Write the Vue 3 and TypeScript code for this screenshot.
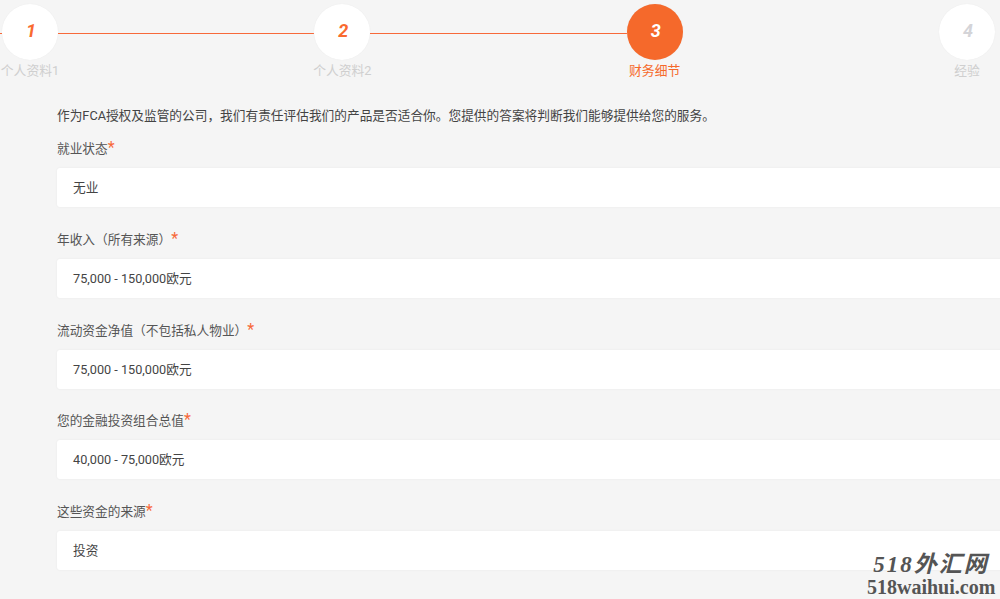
<script setup lang="ts">
interface Step { n: number; label: string; state: string }
interface Field { label: string; value: string }
const steps: Step[] = [
  { n: 1, label: '个人资料1', state: 'done' },
  { n: 2, label: '个人资料2', state: 'done' },
  { n: 3, label: '财务细节', state: 'active' },
  { n: 4, label: '经验', state: 'todo' },
]
const fields: Field[] = [
  { label: '就业状态', value: '无业' },
  { label: '年收入（所有来源）', value: '75,000 - 150,000欧元' },
  { label: '流动资金净值（不包括私人物业）', value: '75,000 - 150,000欧元' },
  { label: '您的金融投资组合总值', value: '40,000 - 75,000欧元' },
  { label: '这些资金的来源', value: '投资' },
]
</script>

<template>
  <div class="page">
    <div class="stepper">
      <template v-for="(s, i) in steps" :key="s.n">
        <div class="step" :class="s.state">
          <div class="circle">{{ s.n }}</div>
          <div class="step-label">{{ s.label }}</div>
        </div>
        <div v-if="i < 2" class="link"></div>
        <div v-else-if="i === 2" class="gap"></div>
      </template>
    </div>
    <div class="lead-edge"></div>
    <div class="form">
      <p class="intro">作为FCA授权及监管的公司，我们有责任评估我们的产品是否适合你。您提供的答案将判断我们能够提供给您的服务。</p>
      <div v-for="f in fields" :key="f.label" class="field">
        <div class="label">{{ f.label }}<span class="req">*</span></div>
        <div class="input">{{ f.value }}</div>
      </div>
    </div>
    <div class="watermark">
      <div class="wm-top">518外汇网</div>
      <div class="wm-bottom">518waihui.com</div>
    </div>
  </div>
</template>

<style>
html, body { margin: 0; background: #f5f5f5; }
</style>

<style scoped>
.page {
  position: relative;
  width: 1000px;
  height: 599px;
  overflow: hidden;
  background: #f5f5f5;
  font-family: Roboto, "Noto Sans CJK SC", sans-serif;
  font-size: 12.7px;
  color: #444;
}
.stepper {
  display: flex;
  align-items: flex-start;
  padding: 4px 5px 0 2px;
  height: 94px;
  box-sizing: border-box;
}
.step {
  width: 56px;
  flex: none;
  display: flex;
  flex-direction: column;
  align-items: center;
}
.circle {
  width: 56px;
  height: 56px;
  flex: none;
  border-radius: 50%;
  background: #fff;
  box-shadow: 0 0 1px #e4e4e4;
  display: flex;
  align-items: center;
  justify-content: center;
  font-size: 18px;
  font-weight: 700;
  font-style: italic;
  padding: 0 0 4px 2px;
  box-sizing: border-box;
  color: #f96a2f;
}
.step-label {
  margin-top: 2px;
  font-size: 12.8px;
  line-height: 17px;
  white-space: nowrap;
  color: #cfcfcf;
}
.active .circle { background: #f5692b; color: #fff; }
.active .step-label { color: #f5692b; }
.todo .circle { color: #d4d4d8; }
.link {
  flex: 1;
  height: 1px;
  margin-top: 29px;
  background: #f7693a;
}
.gap { flex: 1; }
.lead-edge {
  position: absolute;
  left: 0;
  top: 33px;
  width: 2px;
  height: 1px;
  background: #f7693a;
}
.form { padding-left: 57px; }
.intro {
  margin: 0;
  padding-top: 13px;
  line-height: 17px;
  white-space: nowrap;
  color: #444;
}
.field {
  width: 1000px;
  height: 90.75px;
}
.label {
  padding-top: 15px;
  height: 19px;
  line-height: 19px;
  color: #555;
  white-space: nowrap;
}
.req {
  color: #f7693a;
  font-size: 16px;
  line-height: 14px;
}
.input {
  height: 39px;
  margin-top: 10px;
  padding-left: 16px;
  box-sizing: border-box;
  background: #fff;
  border-radius: 3px;
  box-shadow: 0 0 2px #e8e8e8;
  line-height: 39px;
  color: #444;
}
.watermark {
  position: absolute;
  right: 5px;
  bottom: 3px;
  width: 128px;
  text-align: center;
  color: #555;
}
.wm-top {
  font-family: "Liberation Serif", "Noto Sans CJK SC", serif;
  font-size: 23px;
  font-weight: 700;
  font-style: italic;
  line-height: 24px;
  letter-spacing: 2px;
  white-space: nowrap;
  margin-bottom: 2px;
}
.wm-bottom {
  font-family: "Liberation Serif", serif;
  font-size: 20px;
  font-weight: 700;
  line-height: 17px;
  white-space: nowrap;
}
</style>
